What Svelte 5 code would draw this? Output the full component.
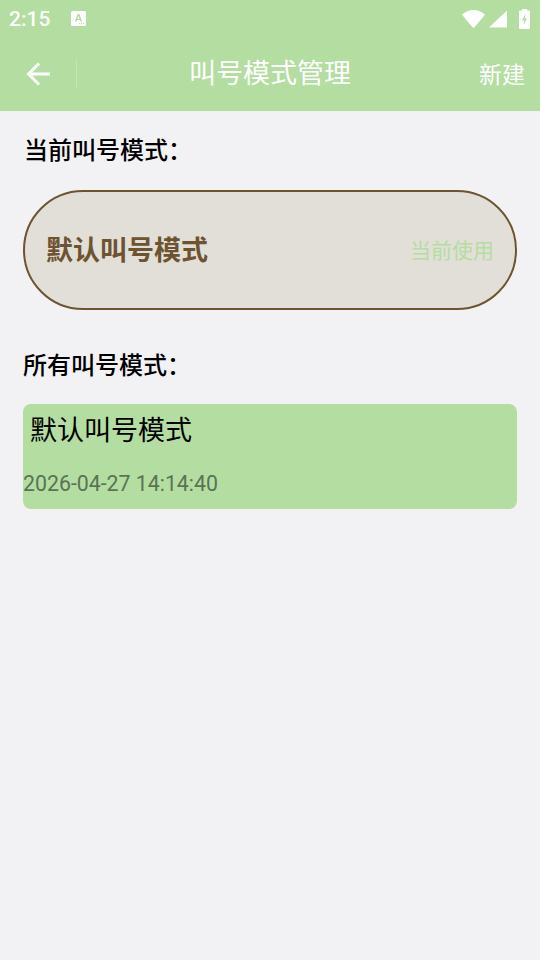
<script>
  let modes = [{ name: '默认叫号模式', time: '2026-04-27 14:14:40' }];
</script>

<div class="page">
  <header class="top">
    <div class="status">
      <span class="clock">2:15</span>
      <svg class="notice" width="15" height="15" viewBox="0 0 15 15">
        <path fill="#fff" fill-rule="evenodd" d="M1.500 0h12A1.500 1.500 0 0 1 15 1.500v12a1.500 1.500 0 0 1-1.500 1.500h-12A1.500 1.500 0 0 1 0 13.500v-12A1.500 1.500 0 0 1 1.500 0zM6.600 3 3.900 10.500h1.600l.5-1.500h3l.5 1.500h1.600L8.400 3zM7.500 5l1 2.800h-2z"/>
        <path fill="#b4dda1" d="M8 12h1v1H8zM10 12h1v1h-1zM12 12h1v1h-1z"/>
      </svg>
      <div class="status-right">
        <svg class="wifi" width="23" height="18" viewBox="0 0 23 18"><path fill="#fff" d="M0 4.700C3.100 1.800 7.100 0 11.500 0S19.900 1.800 23 4.700L12.500 17.300a1.300 1.300 0 0 1-2 0z"/></svg>
        <svg class="signal" width="18" height="18" viewBox="0 0 18 18"><path fill="#fff" d="M18 .5V17.500H0z"/></svg>
        <svg class="battery" width="11" height="20" viewBox="0 0 11 20">
          <path fill="#fff" d="M3 0h5v1.500h2a1 1 0 0 1 1 1V19a1 1 0 0 1-1 1H1a1 1 0 0 1-1-1V2.500a1 1 0 0 1 1-1h2z"/>
          <path fill="#b4dda1" d="M6.500 4.500 3 11.500h2.300L4.500 16.500 8 9.300H5.700z"/>
        </svg>
      </div>
    </div>
    <nav class="bar">
      <button class="back" aria-label="返回">
        <svg width="26" height="26" viewBox="0 0 26 26">
          <path fill="none" stroke="#fff" stroke-width="3" d="M25 13H4M14 2.500 3.500 13 14 23.500"/>
        </svg>
      </button>
      <span class="divider"></span>
      <h1>叫号模式管理</h1>
      <span class="new">新建</span>
    </nav>
  </header>

  <main>
    <h2 class="first">当前叫号模式：</h2>
    <div class="current">
      <span class="current-name">默认叫号模式</span>
      <span class="in-use">当前使用</span>
    </div>

    <h2 class="second">所有叫号模式：</h2>
    {#each modes as mode}
      <div class="mode">
        <div class="mode-name">{mode.name}</div>
        <div class="mode-time">{mode.time}</div>
      </div>
    {/each}
  </main>
</div>

<style>
  :global(body) {
    margin: 0;
    background: #f2f2f4;
  }

  .page {
    height: 960px;
    overflow: hidden;
    background: #f2f2f4;
    font-family: Roboto, "Noto Sans CJK SC", sans-serif;
  }

  .top {
    height: 111px;
    background: #b4dda1;
    color: #fff;
  }

  .status {
    height: 37px;
    display: flex;
    align-items: center;
    padding: 0 10px 0 9px;
    box-sizing: border-box;
  }

  .clock {
    font-size: 21px;
    font-weight: 500;
    width: 62px;
  }

  .notice {
    display: block;
  }

  .status-right {
    margin-left: auto;
    display: flex;
    align-items: center;
    gap: 4px;
  }

  .status-right svg {
    display: block;
  }

  .battery {
    margin-left: 8px;
  }

  .bar {
    height: 74px;
    display: flex;
    align-items: center;
  }

  .back {
    width: 76px;
    height: 74px;
    padding: 0 0 0 25px;
    border: 0;
    background: none;
    display: flex;
    align-items: center;
  }

  .divider {
    width: 1px;
    height: 29px;
    background: #c5e5b7;
  }

  h1 {
    flex: 1;
    margin: 0;
    text-align: center;
    font-size: 27px;
    line-height: 36px;
    font-weight: 400;
    padding-right: 16px;
  }

  .new {
    font-size: 23px;
    margin-right: 15px;
    padding-bottom: 3px;
  }

  main {
    padding: 0 23px;
  }

  h2 {
    margin: 0;
    font-size: 24px;
    font-weight: 500;
    line-height: 30px;
    color: #000;
  }

  .first {
    padding: 25px 0 0 1px;
  }

  .current {
    height: 120px;
    margin-top: 24px;
    box-sizing: border-box;
    border: 2px solid #6d5330;
    border-radius: 60px;
    background: #e2dfd8;
    display: flex;
    align-items: center;
    justify-content: space-between;
    padding: 0 21px 3px;
  }

  .current-name {
    font-size: 27px;
    font-weight: 700;
    color: #6d5330;
  }

  .in-use {
    font-size: 21px;
    color: #b4dda1;
  }

  .second {
    margin-top: 41px;
  }

  .mode {
    height: 105px;
    margin-top: 23px;
    background: #b4dda1;
    border-radius: 8px;
  }

  .mode-name {
    padding: 9px 0 0 7px;
    font-size: 27px;
    line-height: 36px;
    color: #000;
  }

  .mode-time {
    margin-top: 21px;
    font-size: 21.3px;
    line-height: 28px;
    color: #5a7355;
  }
</style>
